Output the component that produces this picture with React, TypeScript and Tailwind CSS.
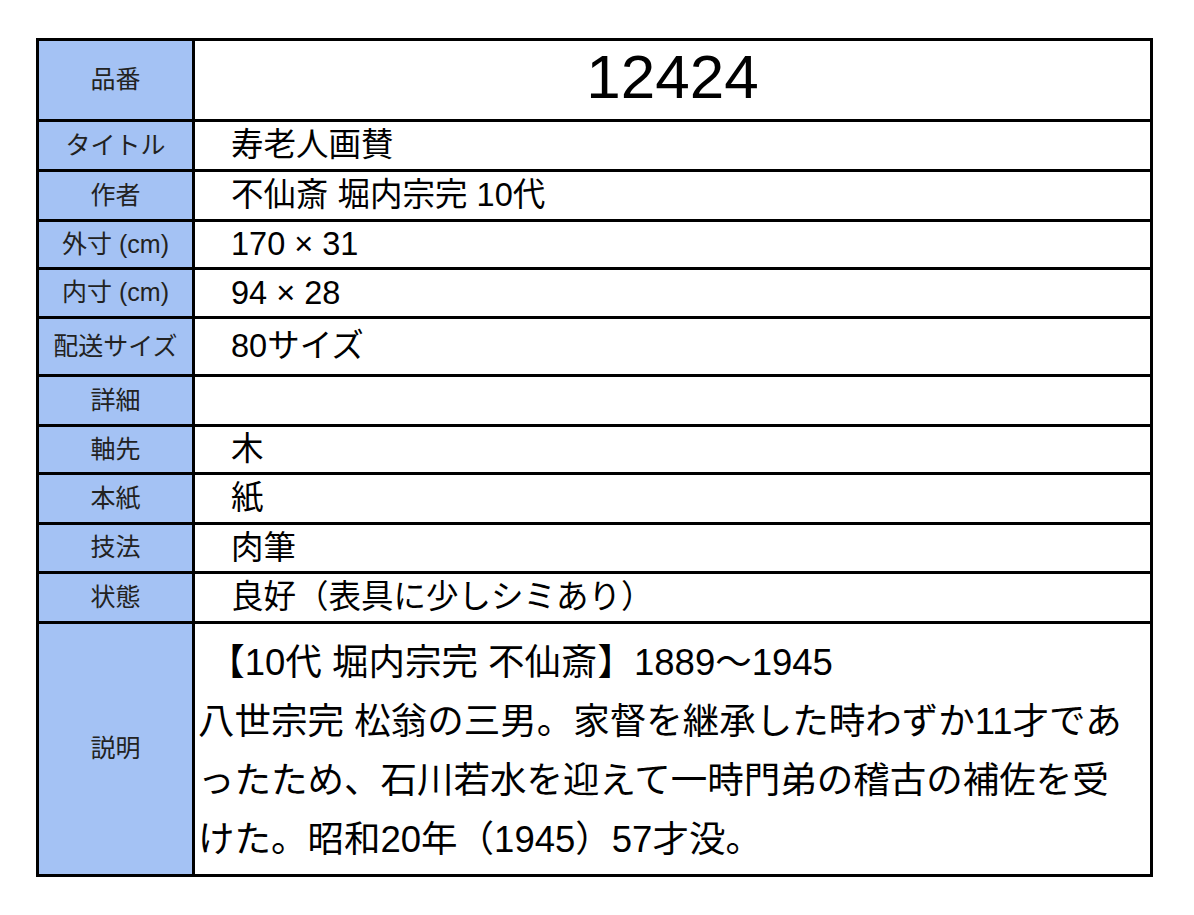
const font = { fontFamily: '"Liberation Sans", "Noto Sans CJK JP", sans-serif' };

type Row = { label: string; value: string; h: string };

const rows: Row[] = [
  { label: "タイトル", value: "寿老人画賛", h: "h-[47px]" },
  { label: "作者", value: "不仙斎 堀内宗完 10代", h: "h-[47px]" },
  { label: "外寸 (cm)", value: "170 × 31", h: "h-[45px]" },
  { label: "内寸 (cm)", value: "94 × 28", h: "h-[46px]" },
  { label: "配送サイズ", value: "80サイズ", h: "h-[55px]" },
  { label: "詳細", value: "", h: "h-[47px]" },
  { label: "軸先", value: "木", h: "h-[45px]" },
  { label: "本紙", value: "紙", h: "h-[47px]" },
  { label: "技法", value: "肉筆", h: "h-[46px]" },
  { label: "状態", value: "良好（表具に少しシミあり）", h: "h-[47px]" },
];

const description = [
  " 【10代 堀内宗完 不仙斎】1889〜1945",
  "八世宗完 松翁の三男。家督を継承した時わずか11才であ",
  "ったため、石川若水を迎えて一時門弟の稽古の補佐を受",
  "けた。昭和20年（1945）57才没。",
];

function Label({ children }: { children: React.ReactNode }) {
  return (
    <div className="w-[153px] shrink-0 bg-[#a4c2f4] border-r-[3px] border-black flex items-center justify-center text-[25px] text-[#222] box-content">
      {children}
    </div>
  );
}

export default function App() {
  return (
    <div className="min-h-screen bg-white pt-[38px] pl-[36px]" style={font}>
      <div className="w-[1117px] border-[3px] border-black flex flex-col">
        <div className="flex h-[78px]">
          <Label>品番</Label>
          <div className="flex-1 flex items-center justify-center text-[62px] text-black leading-none pb-[6px]">
            12424
          </div>
        </div>

        {rows.map((r) => (
          <div key={r.label} className={`flex border-t-[3px] border-black box-content ${r.h}`}>
            <Label>{r.label}</Label>
            <div className="flex-1 flex items-center pl-[36px] text-[32.5px] text-black whitespace-nowrap">
              {r.value}
            </div>
          </div>
        ))}

        <div className="flex h-[250px] border-t-[3px] border-black box-content">
          <Label>説明</Label>
          <div className="flex-1 pt-[9px] pl-[3px] text-[36.5px] leading-[59px] text-black">
            {description.map((line, i) => (
              <div key={i} className="whitespace-pre">
                {line}
              </div>
            ))}
          </div>
        </div>
      </div>
    </div>
  );
}
